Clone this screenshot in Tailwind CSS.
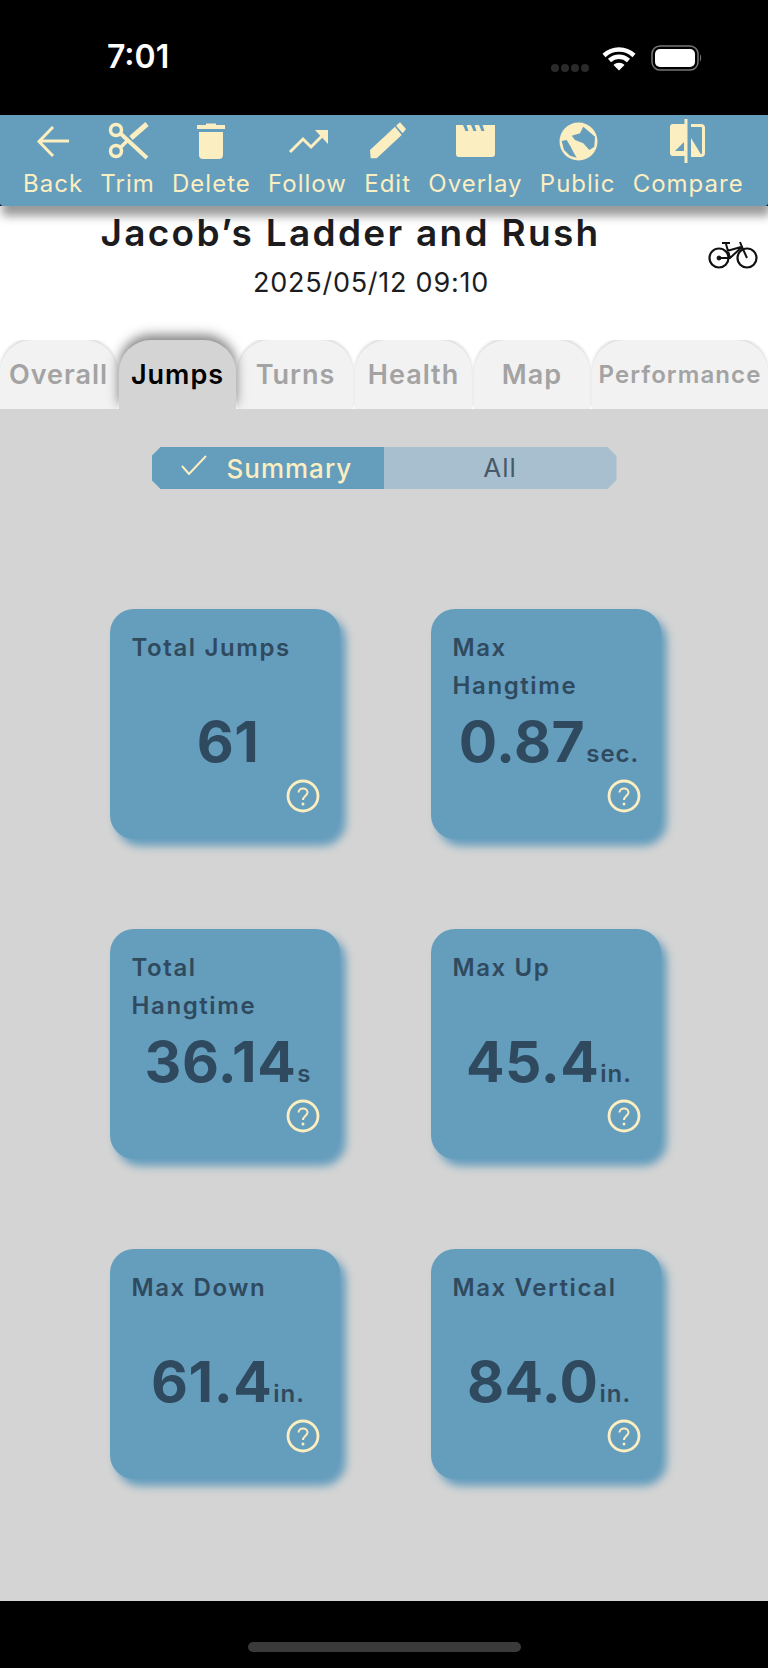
<!DOCTYPE html>
<html>
<head>
<meta charset="utf-8">
<script src="https://cdn.jsdelivr.net/npm/@tailwindcss/browser@4"></script>
</head>
<body class="bg-black font-[Inter,sans-serif]">
<div class="w-[768px] h-[1668px] overflow-hidden flex flex-col bg-black">

  <!-- Status bar -->
  <div class="h-[115px] shrink-0 flex items-start text-white">
    <div class="ml-[107px] mt-[39px] text-[32px] leading-[36px] font-semibold">7:01</div>
    <div class="ml-auto mr-[66px] mt-[44px] flex items-center">
      <div class="flex gap-[2px] mt-[20px] mr-[13px]">
        <span class="w-[8px] h-[8px] rounded-full bg-[#2a2a2a]"></span>
        <span class="w-[8px] h-[8px] rounded-full bg-[#2a2a2a]"></span>
        <span class="w-[8px] h-[8px] rounded-full bg-[#2a2a2a]"></span>
        <span class="w-[8px] h-[8px] rounded-full bg-[#2a2a2a]"></span>
      </div>
      <svg width="34" height="26" viewBox="0 0 34 26" fill="none" stroke="#fff" stroke-width="4.5">
        <path d="M2 10.5C10.5 2.5 23.500 2.500 32 10.500"/>
        <path d="M7.500 15.500C13 10.500 21 10.500 26.500 15.500"/>
        <path d="M17 25.500L11.500 20C14.500 17 19.500 17 22.500 20Z" fill="#fff" stroke="none"/>
      </svg>
      <svg class="ml-[15px]" width="51" height="26" viewBox="0 0 51 26">
        <rect x="1" y="1" width="46" height="24" rx="8" fill="none" stroke="#777" stroke-width="1.500"/>
        <rect x="4" y="4" width="40" height="18" rx="5" fill="#fff"/>
        <path d="M49 9.500C50.500 10.500 50.500 15.500 49 16.500Z" fill="#777"/>
      </svg>
    </div>
  </div>

  <!-- Toolbar -->
  <div class="relative z-10 h-[91px] shrink-0 bg-[#659dbd] rounded-b-[3px] shadow-[2px_10px_10px_rgba(0,0,0,0.4)] flex gap-[17.300px] pl-[23px] pt-[4px] text-[#fbeec1] text-[24px] leading-[28px] tracking-[1px]">
    <div class="flex flex-col items-center">
      <svg width="44" height="44" viewBox="31 119 44 44" fill="none" stroke="#fbeec1" stroke-width="3"><path d="M69 141H40M53 127L39 141.500L53 156"/></svg>
      <span class="mt-[7px]">Back</span>
    </div>
    <div class="flex flex-col items-center">
      <svg width="44" height="44" viewBox="105 119 44 44" fill="none" stroke="#fbeec1">
        <circle cx="115" cy="130" r="5.500" stroke-width="3.500"/>
        <circle cx="115" cy="151" r="5.500" stroke-width="3.500"/>
        <path d="M119.500 133.500L146 158" stroke-width="4"/>
        <path d="M119.500 147.500L127 140" stroke-width="3.500"/>
        <path d="M130 138L146 124" stroke-width="5"/>
      </svg>
      <span class="mt-[7px]">Trim</span>
    </div>
    <div class="flex flex-col items-center">
      <svg width="44" height="44" viewBox="189 119 44 44" fill="#fbeec1">
        <path d="M197 125H206V123.500H216V125H225V129H197Z"/>
        <path d="M199 132H223V155C223 157.500 221.500 159 219 159H203C200.500 159 199 157.500 199 155Z"/>
      </svg>
      <span class="mt-[7px]">Delete</span>
    </div>
    <div class="flex flex-col items-center">
      <svg width="44" height="44" viewBox="286 119 44 44" fill="none" stroke="#fbeec1" stroke-width="3">
        <path d="M290 152L303 139L311 147L323 135"/>
        <path d="M315 130H328V144Z" fill="#fbeec1" stroke="none"/>
      </svg>
      <span class="mt-[7px]">Follow</span>
    </div>
    <div class="flex flex-col items-center">
      <svg width="44" height="44" viewBox="366 119 44 44" fill="#fbeec1">
        <path d="M370 150L395 126.700L401.700 135L376.700 158.300H370.700Z"/>
        <path d="M396 125.700L400 122.300L406 129L402.700 133.300Z"/>
      </svg>
      <span class="mt-[7px]">Edit</span>
    </div>
    <div class="flex flex-col items-center">
      <svg width="44" height="44" viewBox="454 119 44 44" fill="#fbeec1">
        <path d="M457 125H464L466.500 131H469.500L467.500 125H472L474.500 131H477.500L475.500 125H480L482.500 131H485.500L483.500 125H496V154C496 156 495 157 493 157H460C458 157 457 156 457 154Z"/>
      </svg>
      <span class="mt-[7px]">Overlay</span>
    </div>
    <div class="flex flex-col items-center">
      <svg width="44" height="44" viewBox="556 119 44 44">
        <circle cx="578.500" cy="141.500" r="19" fill="#fbeec1"/>
        <path d="M583.300 126.700L595 136.700L594.300 146.700L589.300 150L583.300 143.300L575 140L571.700 135.700L580 133.300Z" fill="#659dbd"/>
        <path d="M561.700 141L566.700 140L570.700 146.700L574 153.300L576.700 157.700L570 155.700L564 150Z" fill="#659dbd"/>
      </svg>
      <span class="mt-[7px]">Public</span>
    </div>
    <div class="flex flex-col items-center">
      <svg width="44" height="44" viewBox="668 119 44 44">
        <path d="M687 124V156H675C673 156 672 155 672 153V127C672 125 673 124 675 124Z" fill="#fbeec1"/>
        <path d="M686 142V151H677Z" fill="#659dbd"/>
        <rect x="686.500" y="119" width="3" height="44" fill="#fbeec1"/>
        <path d="M693 125.500H703C705 125.500 705.500 126.500 705.500 128V153C705.500 155 705 155.500 703 155.500H693" fill="none" stroke="#fbeec1" stroke-width="3"/>
        <path d="M693 138L704 156H693Z" fill="#fbeec1"/>
      </svg>
      <span class="mt-[7px]">Compare</span>
    </div>
  </div>

  <!-- Header -->
  <div class="relative h-[134px] shrink-0 bg-white flex flex-col">
    <h1 class="pr-[67px] text-center text-[37px] leading-[44px] mt-[5px] font-semibold tracking-[2.3px] text-[#1c1c1e] whitespace-nowrap">Jacob’s Ladder and Rush</h1>
    <p class="pr-[26px] text-center text-[27px] leading-[32px] mt-[12px] tracking-[0.75px] text-[#1c1c1e]">2025/05/12 09:10</p>
    <svg class="absolute left-[708px] top-[32px]" width="50" height="32" viewBox="0 0 50 32" fill="none" stroke="#111">
      <circle cx="11" cy="20" r="9.500" stroke-width="2.200"/>
      <circle cx="39" cy="20" r="9.500" stroke-width="2.200"/>
      <circle cx="11" cy="20" r="2" fill="#111" stroke-width="1"/>
      <path d="M11 20L22 20L34 9L39 20M22 20L18 6M34 9L32 4M14 5H22M19 13L33 9" stroke-width="2"/>
    </svg>
  </div>

  <!-- Tabs -->
  <div class="h-[69px] shrink-0 bg-white flex gap-[2px] text-[27px] leading-[32px] font-semibold tracking-[1px] text-[#a3a3a3]">
    <div class="w-[117px] rounded-t-[32px] bg-[#f2f2f2] shadow-[0_-2px_3px_rgba(0,0,0,0.15)] flex items-center justify-center whitespace-nowrap">Overall</div>
    <div class="relative z-[1] w-[117px] rounded-t-[32px] bg-[#d4d4d4] text-black shadow-[0_-5px_12px_rgba(0,0,0,0.5)] flex items-center justify-center">Jumps</div>
    <div class="w-[115px] rounded-t-[32px] bg-[#f2f2f2] shadow-[0_-2px_3px_rgba(0,0,0,0.15)] flex items-center justify-center">Turns</div>
    <div class="w-[117px] rounded-t-[32px] bg-[#f2f2f2] shadow-[0_-2px_3px_rgba(0,0,0,0.15)] flex items-center justify-center">Health</div>
    <div class="w-[116px] rounded-t-[32px] bg-[#f2f2f2] shadow-[0_-2px_3px_rgba(0,0,0,0.15)] flex items-center justify-center">Map</div>
    <div class="flex-1 rounded-t-[32px] bg-[#f2f2f2] shadow-[0_-2px_3px_rgba(0,0,0,0.15)] flex items-center justify-center text-[24px] tracking-[1.1px] whitespace-nowrap">Performance</div>
  </div>

  <!-- Content -->
  <div class="relative z-[2] h-[1192px] shrink-0 bg-[#d4d4d4] flex flex-col items-center">
    <div class="mt-[38px] w-[465px] h-[42px] flex text-[26px] leading-[32px] tracking-[1px] [clip-path:polygon(9px_0,calc(100%-9px)_0,100%_9px,100%_calc(100%-9px),calc(100%-9px)_100%,9px_100%,0_calc(100%-9px),0_9px)]">
      <div class="w-[232px] bg-[#659dbd] flex items-center text-[#fbeec1] font-medium">
        <svg class="ml-[29px] mb-[6px]" width="26" height="20" viewBox="0 0 26 20" fill="none" stroke="#fbeec1" stroke-width="2"><path d="M1 11L8 19L25 1"/></svg>
        <span class="ml-[20px] mt-[2px]">Summary</span>
      </div>
      <div class="flex-1 bg-[#a8bfcf] flex items-center justify-center text-[#475a69]">All</div>
    </div>

    <div class="mt-[120px] ml-[2px] grid grid-cols-[230px_230px] auto-rows-[230px] gap-x-[91px] gap-y-[90px] text-[#2f4a5f]">
      <div class="rounded-[24px] bg-[#659dbd] shadow-[6px_7px_8px_#659dbd] flex flex-col px-[22px] pt-[20px] pb-[26px]">
        <div class="h-[79px] text-[24px] leading-[38px] font-semibold tracking-[1.6px]">Total Jumps</div>
        <div class="pl-[7px] flex items-baseline justify-center font-bold text-[57px] leading-[68px] tracking-[0.5px] whitespace-nowrap">61</div>
        <svg class="mt-auto self-end mr-[-2px]" width="34" height="34" viewBox="0 0 34 34" fill="none" stroke="#fbeec1" stroke-width="2.800"><circle cx="17" cy="17" r="15"/><path d="M12.500 13.500C12.500 8 21.500 8 21.500 13.500C21.500 16.500 17 17 17 21" stroke-width="2"/><circle cx="17" cy="25" r="1.500" fill="#fbeec1" stroke="none"/></svg>
      </div>
      <div class="rounded-[24px] bg-[#659dbd] shadow-[6px_7px_8px_#659dbd] flex flex-col px-[22px] pt-[20px] pb-[26px]">
        <div class="h-[79px] text-[24px] leading-[38px] font-semibold tracking-[1.6px]">Max<br>Hangtime</div>
        <div class="pl-[7px] flex items-baseline justify-center font-bold text-[57px] leading-[68px] tracking-[0.5px] whitespace-nowrap">0.87<span class="text-[24px] leading-none font-semibold tracking-[1px] ml-[1px]">sec.</span></div>
        <svg class="mt-auto self-end mr-[-2px]" width="34" height="34" viewBox="0 0 34 34" fill="none" stroke="#fbeec1" stroke-width="2.800"><circle cx="17" cy="17" r="15"/><path d="M12.500 13.500C12.500 8 21.500 8 21.500 13.500C21.500 16.500 17 17 17 21" stroke-width="2"/><circle cx="17" cy="25" r="1.500" fill="#fbeec1" stroke="none"/></svg>
      </div>
      <div class="rounded-[24px] bg-[#659dbd] shadow-[6px_7px_8px_#659dbd] flex flex-col px-[22px] pt-[20px] pb-[26px]">
        <div class="h-[79px] text-[24px] leading-[38px] font-semibold tracking-[1.6px]">Total<br>Hangtime</div>
        <div class="pl-[7px] flex items-baseline justify-center font-bold text-[57px] leading-[68px] tracking-[0.5px] whitespace-nowrap">36.14<span class="text-[24px] leading-none font-semibold tracking-[1px] ml-[1px]">s</span></div>
        <svg class="mt-auto self-end mr-[-2px]" width="34" height="34" viewBox="0 0 34 34" fill="none" stroke="#fbeec1" stroke-width="2.800"><circle cx="17" cy="17" r="15"/><path d="M12.500 13.500C12.500 8 21.500 8 21.500 13.500C21.500 16.500 17 17 17 21" stroke-width="2"/><circle cx="17" cy="25" r="1.500" fill="#fbeec1" stroke="none"/></svg>
      </div>
      <div class="rounded-[24px] bg-[#659dbd] shadow-[6px_7px_8px_#659dbd] flex flex-col px-[22px] pt-[20px] pb-[26px]">
        <div class="h-[79px] text-[24px] leading-[38px] font-semibold tracking-[1.6px]">Max Up</div>
        <div class="pl-[7px] flex items-baseline justify-center font-bold text-[57px] leading-[68px] tracking-[0.5px] whitespace-nowrap">45.4<span class="text-[24px] leading-none font-semibold tracking-[1px] ml-[1px]">in.</span></div>
        <svg class="mt-auto self-end mr-[-2px]" width="34" height="34" viewBox="0 0 34 34" fill="none" stroke="#fbeec1" stroke-width="2.800"><circle cx="17" cy="17" r="15"/><path d="M12.500 13.500C12.500 8 21.500 8 21.500 13.500C21.500 16.500 17 17 17 21" stroke-width="2"/><circle cx="17" cy="25" r="1.500" fill="#fbeec1" stroke="none"/></svg>
      </div>
      <div class="rounded-[24px] bg-[#659dbd] shadow-[6px_7px_8px_#659dbd] flex flex-col px-[22px] pt-[20px] pb-[26px]">
        <div class="h-[79px] text-[24px] leading-[38px] font-semibold tracking-[1.6px]">Max Down</div>
        <div class="pl-[7px] flex items-baseline justify-center font-bold text-[57px] leading-[68px] tracking-[0.5px] whitespace-nowrap">61.4<span class="text-[24px] leading-none font-semibold tracking-[1px] ml-[1px]">in.</span></div>
        <svg class="mt-auto self-end mr-[-2px]" width="34" height="34" viewBox="0 0 34 34" fill="none" stroke="#fbeec1" stroke-width="2.800"><circle cx="17" cy="17" r="15"/><path d="M12.500 13.500C12.500 8 21.500 8 21.500 13.500C21.500 16.500 17 17 17 21" stroke-width="2"/><circle cx="17" cy="25" r="1.500" fill="#fbeec1" stroke="none"/></svg>
      </div>
      <div class="rounded-[24px] bg-[#659dbd] shadow-[6px_7px_8px_#659dbd] flex flex-col px-[22px] pt-[20px] pb-[26px]">
        <div class="h-[79px] text-[24px] leading-[38px] font-semibold tracking-[1.6px]">Max Vertical</div>
        <div class="pl-[7px] flex items-baseline justify-center font-bold text-[57px] leading-[68px] tracking-[0.5px] whitespace-nowrap">84.0<span class="text-[24px] leading-none font-semibold tracking-[1px] ml-[1px]">in.</span></div>
        <svg class="mt-auto self-end mr-[-2px]" width="34" height="34" viewBox="0 0 34 34" fill="none" stroke="#fbeec1" stroke-width="2.800"><circle cx="17" cy="17" r="15"/><path d="M12.500 13.500C12.500 8 21.500 8 21.500 13.500C21.500 16.500 17 17 17 21" stroke-width="2"/><circle cx="17" cy="25" r="1.500" fill="#fbeec1" stroke="none"/></svg>
      </div>
    </div>
  </div>

  <!-- Home indicator -->
  <div class="flex-1 flex justify-center pt-[41px]">
    <div class="w-[273px] h-[10px] rounded-full bg-[#3a3a3a]"></div>
  </div>
</div>
</body>
</html>
